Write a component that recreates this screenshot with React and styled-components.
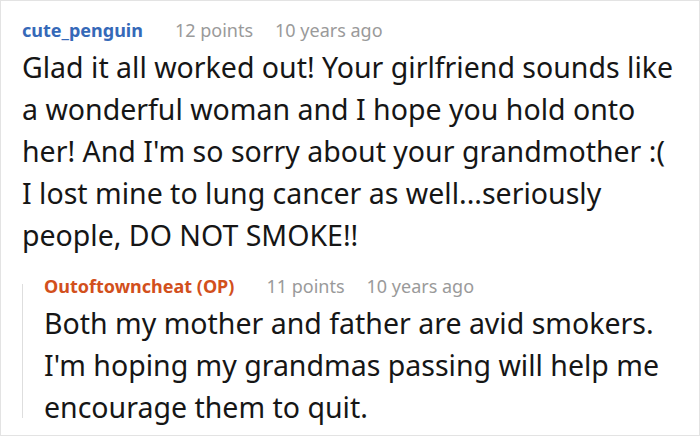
import React from "react"
import styled, { createGlobalStyle } from "styled-components"

const GlobalStyle = createGlobalStyle`
  html, body {
    margin: 0;
    padding: 0;
    background: #ffffff;
  }
  body {
    font-family: "Noto Sans", "Open Sans", sans-serif;
    -webkit-font-smoothing: antialiased;
  }
`

const Frame = styled.div`
  box-sizing: border-box;
  width: 700px;
  height: 436px;
  border: 1px solid #e3e3e3;
  padding: 17px 10px 0 21px;
  overflow: hidden;
`

const Comment = styled.div`
  display: flex;
  flex-direction: column;
  position: relative;
  padding-left: ${({ nested }) => (nested ? "22px" : "0")};
  margin-top: ${({ nested }) => (nested ? "18px" : "0")};

  &::before {
    content: "";
    display: ${({ nested }) => (nested ? "block" : "none")};
    position: absolute;
    left: 0;
    top: 10px;
    bottom: 10px;
    width: 1px;
    background: #dedede;
  }
`

const Meta = styled.div`
  display: flex;
  align-items: center;
  height: 24px;
  font-size: 18px;
  line-height: 24px;
  white-space: nowrap;
`

const Author = styled.span`
  font-weight: 700;
  color: ${({ op }) => (op ? "#d2501c" : "#3569b8")};
  margin-right: 32px;
`

const Stat = styled.span`
  color: #9a9a9a;
  margin-right: 22px;
`

const Body = styled.p`
  margin: 4px 0 0;
  font-size: 28.5px;
  line-height: 42px;
  color: #161616;
  white-space: nowrap;
`

const App = () => (
  <>
    <GlobalStyle />
    <Frame>
      <Comment>
        <Meta>
          <Author>cute_penguin</Author>
          <Stat>12 points</Stat>
          <Stat>10 years ago</Stat>
        </Meta>
        <Body>
          Glad it all worked out! Your girlfriend sounds like
          <br />a wonderful woman and I hope you hold onto
          <br />her! And I'm so sorry about your grandmother :(
          <br />I lost mine to lung cancer as well...seriously
          <br />people, DO NOT SMOKE!!
        </Body>
      </Comment>
      <Comment nested>
        <Meta>
          <Author op>Outoftowncheat (OP)</Author>
          <Stat>11 points</Stat>
          <Stat>10 years ago</Stat>
        </Meta>
        <Body>
          Both my mother and father are avid smokers.
          <br />I'm hoping my grandmas passing will help me
          <br />encourage them to quit.
        </Body>
      </Comment>
    </Frame>
  </>
)

export default App
